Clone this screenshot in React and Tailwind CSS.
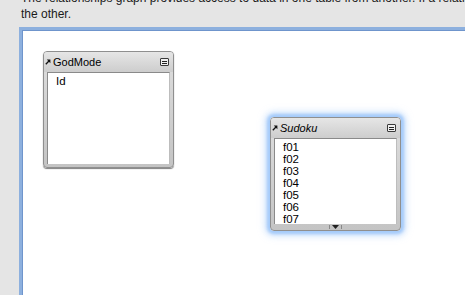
import React from "react";

const font = { fontFamily: '"Liberation Sans", Arial, sans-serif' };

function Arrow() {
  return (
    <svg width="6" height="6" viewBox="0 0 6 6" className="shrink-0">
      <path d="M0.8 5.2 L4.2 1.8" stroke="#111" strokeWidth="1.3" />
      <path d="M1.8 0.6 H5.4 V4.2 Z" fill="#111" />
    </svg>
  );
}

function MinBtn() {
  return (
    <div className="w-[9px] h-[8px] border border-[#3a3a3a] bg-[#f0f0f0] rounded-[1px] flex flex-col justify-center gap-[1px] px-[1px]">
      <div className="h-px bg-[#222]" />
      <div className="h-px bg-[#222]" />
    </div>
  );
}

function TableNode({ name, italic, fields, left, top, width, height, glow, scroll }) {
  return (
    <div
      className={`absolute flex flex-col rounded-[4px] border border-[#8f8f8f] bg-gradient-to-b from-[#dedede] to-[#c4c4c4] ${
        glow
          ? "shadow-[0_0_3px_3px_rgba(160,200,250,0.9),0_0_7px_5px_rgba(170,205,250,0.6)]"
          : "shadow-[0_1px_1px_rgba(0,0,0,0.5)]"
      }`}
      style={{ left, top, width, height }}
    >
      <div className="h-[20px] shrink-0 flex items-center pl-[1px] pr-[4px] bg-gradient-to-b from-[#e6e6e6] to-[#cdcdcd] rounded-t-[3px]">
        <Arrow />
        <span className={`ml-[2px] text-[11px] text-black leading-none ${italic ? "italic" : ""}`} style={font}>
          {name}
        </span>
        <div className="ml-auto">
          <MinBtn />
        </div>
      </div>
      <div className="flex-1 mx-[3px] bg-white border-t border-l border-[#8a8a8a] border-r border-r-[#bdbdbd] pt-[2px] pl-[8px] overflow-hidden">
        {fields.map((f) => (
          <div key={f} className="text-[11.5px] leading-[12px] text-black" style={font}>
            {f}
          </div>
        ))}
      </div>
      <div className={`${scroll ? "h-[6px]" : "h-[3px]"} shrink-0 flex justify-center items-center`}>
        {scroll && (
          <div className="flex items-center gap-[2px]">
            <div className="w-px h-[4px] bg-[#888]" />
            <svg width="7" height="4" viewBox="0 0 7 4">
              <path d="M0 0 H7 L3.5 4 Z" fill="#222" />
            </svg>
            <div className="w-px h-[4px] bg-[#888]" />
          </div>
        )}
      </div>
    </div>
  );
}

export default function App() {
  return (
    <div className="w-[465px] h-[295px] overflow-hidden bg-[#e5e5e5] flex flex-col" style={font}>
      <div className="mt-[-10px] pl-[21px] text-[12px] leading-[16px] text-[#1a1a1a] h-[32px] shrink-0">
        <div className="whitespace-nowrap">
          The relationships graph provides access to data in one table from another. If a relationship exists
        </div>
        <div>the other.</div>
      </div>
      <div className="mt-[5px] ml-[19px] flex-1 relative bg-white border-t-[3px] border-l-[3px] border-[#8db0de] shadow-[inset_1px_1px_0_#6f95cc]">
        <TableNode name="GodMode" fields={["Id"]} left={21} top={21} width={131} height={117} />
        <TableNode
          name="Sudoku"
          italic
          glow
          scroll
          fields={["f01", "f02", "f03", "f04", "f05", "f06", "f07"]}
          left={248}
          top={87}
          width={131}
          height={114}
        />
      </div>
    </div>
  );
}
